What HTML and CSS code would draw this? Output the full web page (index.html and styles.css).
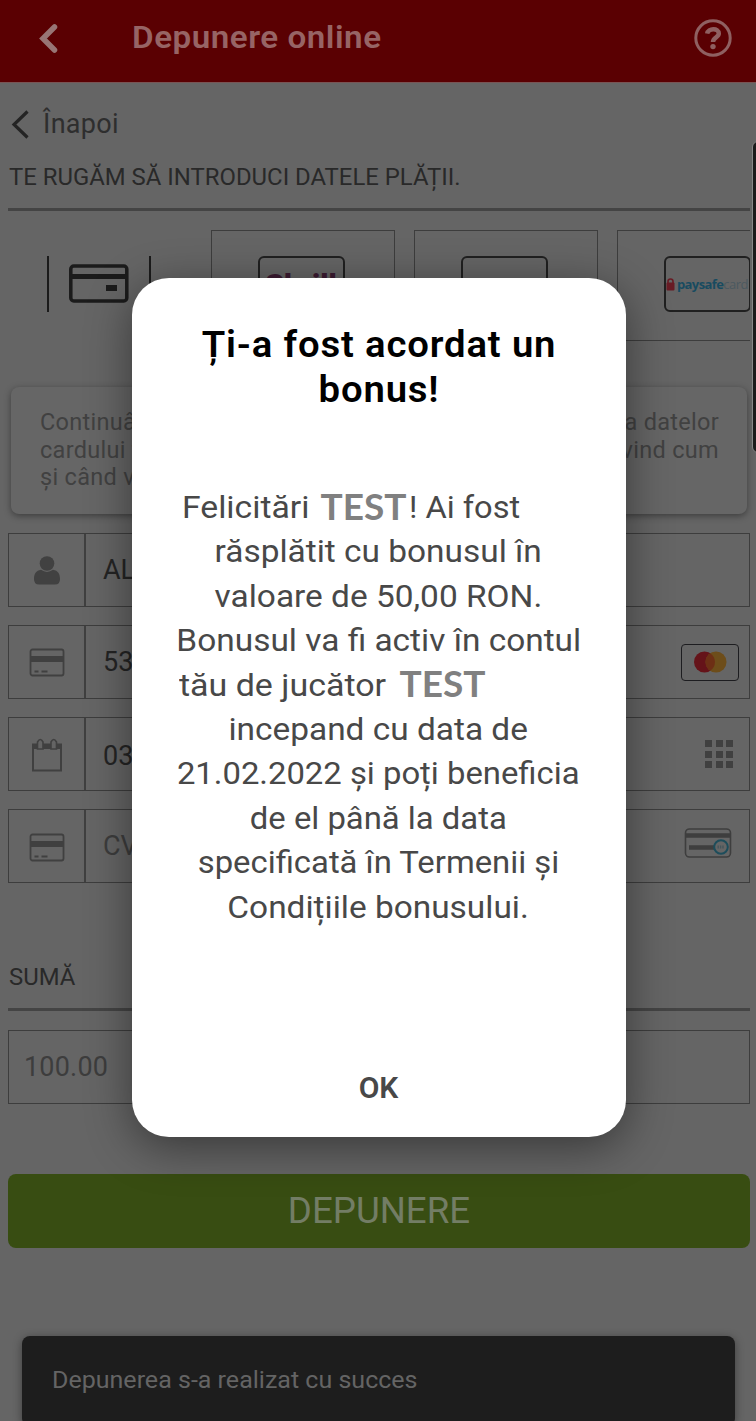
FILE: index.html
```html
<!DOCTYPE html>
<html lang="ro">
<head>
<meta charset="utf-8">
<title>Depunere online</title>
<link rel="stylesheet" href="styles.css">
</head>
<body>
<div class="screen">
  <header class="topbar">
    <svg class="topbar-back" width="24" height="34" viewBox="0 0 24 34"><path d="M17.500 5L6 16.500L17.500 28" /></svg>
    <h1 class="topbar-title"><span class="t-head">Depunere online</span></h1>
    <svg class="help" width="40" height="40" viewBox="0 0 40 40"><circle cx="20" cy="20" r="17.200"/><path d="M14.200 15.600C15 10 25.800 9.600 25.800 15.600C25.800 19.700 20 19 20 24"/><circle class="dot" cx="20" cy="28.600" r="2.700"/></svg>
  </header>
  <main class="content">
    <a class="back"><svg width="20" height="32" viewBox="0 0 20 32"><path d="M17.500 3.500L4 16.500L17.500 29.500"/></svg><span class="t-back">Înapoi</span></a>
    <h2 class="section"><span class="t-section">TE RUGĂM SĂ INTRODUCI DATELE PLĂȚII.</span></h2>
    <div class="methods">
      <div class="method active">
        <div class="bracket"><svg width="60" height="40" viewBox="0 0 60 40"><rect x="1.800" y="2" width="56" height="35" rx="3" fill="none" stroke="#1b1b1b" stroke-width="3.500"/><path d="M2 12.500H58" stroke="#1b1b1b" stroke-width="5"/><rect x="37" y="21" width="11" height="6" fill="#1b1b1b"/></svg></div>
      </div>
      <div class="method"><div class="logo skrill">Skrill</div></div>
      <div class="method"><div class="logo"></div></div>
      <div class="method"><div class="logo paysafe"><svg width="9" height="13" viewBox="0 0 9 13"><path d="M2 6V3.500A2.500 2.500 0 0 1 7 3.500V6" fill="none" stroke="#681b24" stroke-width="1.600"/><rect x="0.500" y="4.500" width="8" height="8" rx="1" fill="#681b24"/></svg><span class="ps-a">paysafe</span><span class="ps-b">card</span></div></div>
    </div>
    <div class="notice">
      <div class="notice-row"><span>Continuând, ești de acord cu stocarea</span><span>a datelor</span></div>
      <div class="notice-row"><span>cardului tău și confirmi politica pri</span><span>vind cum</span></div>
      <div class="notice-row"><span>și când vor fi folosite.</span></div>
    </div>
    <div class="fields">
      <div class="field"><div class="cell"><svg width="28" height="30" viewBox="0 0 28 30"><circle cx="14" cy="8.500" r="7.300" fill="#414141"/><path d="M8 14.800Q14 19 20 14.800C25 15.500 27 19 27 24Q27 29.500 22 29.500H6Q1 29.500 1 24C1 19 3 15.500 8 14.800Z" fill="#414141"/></svg></div><span class="value">ALEX</span></div>
      <div class="field"><div class="cell"><svg class="cardic" width="36" height="30" viewBox="0 0 36 30"><rect x="1.500" y="1.500" width="33" height="26" rx="2"/><path class="stripe" d="M2 11H34"/><path d="M5.500 23.500H9.500M12.500 23.500H18.500"/></svg></div><span class="value">5355</span><div class="mc"><svg width="34" height="22" viewBox="0 0 34 22"><circle cx="11.500" cy="11" r="10.500" fill="#651319"/><circle cx="23" cy="11" r="10.500" fill="#6d4d1a"/><path d="M17.200 2.200A10.500 10.500 0 0 1 17.200 19.800A10.500 10.500 0 0 1 17.200 2.200" fill="#6d2f15"/></svg></div></div>
      <div class="field"><div class="cell"><svg class="cal" width="32" height="34" viewBox="0 0 32 34"><path d="M2 6.500H30V32.500H2Z"/><path class="calbar" d="M2 8.500H30"/><path class="ring" d="M6.500 11V4Q9.300 -1 12 4V11ZM20 11V4Q22.700 -1 25.500 4V11Z"/></svg></div><span class="value low">03/24</span><div class="grid9"><i></i><i></i><i></i><i></i><i></i><i></i><i></i><i></i><i></i></div></div>
      <div class="field"><div class="cell"><svg class="cardic" width="36" height="30" viewBox="0 0 36 30"><rect x="1.500" y="1.500" width="33" height="26" rx="2"/><path class="stripe" d="M2 11H34"/><path d="M5.500 23.500H9.500M12.500 23.500H18.500"/></svg></div><span class="value faint">CVV</span><svg class="cvv" width="48" height="32" viewBox="0 0 48 32"><rect x="1.500" y="2" width="45" height="28" rx="4" fill="none" stroke="#3e3e3e" stroke-width="1.600"/><path d="M2 8.500H46M5 20.500H30" stroke="#3e3e3e" stroke-width="4.500"/><circle cx="37" cy="20" r="6.800" fill="#656565" stroke="#1d4d5b" stroke-width="2"/><path d="M33.500 20H40" stroke="#45565b" stroke-width="3" stroke-dasharray="1.400 1"/></svg></div>
    </div>
    <h2 class="section sum"><span class="t-sum">SUMĂ</span></h2>
    <div class="amount">100.00</div>
    <div class="submit"><span class="t-submit">DEPUNERE</span></div>
  </main>
  <div class="edge"></div>
  <div class="toast"><span class="t-toast">Depunerea s-a realizat cu succes</span></div>
  <div class="overlay">
    <section class="modal">
      <div class="modal-title"><div class="h1a">Ți-a fost acordat un</div><div class="h1b">bonus!</div></div>
      <div class="modal-text">
        <div class="line l1"><span class="l1a">Felicitări</span><b>TEST</b><span class="l1b">! Ai fost</span></div>
        <div class="line"><span class="wide">răsplătit cu bonusul în</span></div>
        <div class="line"><span class="wide">valoare de 50,00 RON.</span></div>
        <div class="line"><span class="wide">Bonusul va fi activ în contul</span></div>
        <div class="line l5"><span class="l5a">tău de jucător</span><b>TEST</b></div>
        <div class="line"><span class="wide">incepand cu data de</span></div>
        <div class="line"><span class="mid">21.02.2022 și poți beneficia</span></div>
        <div class="line"><span class="mid">de el până la data</span></div>
        <div class="line"><span class="mid">specificată în Termenii și</span></div>
        <div class="line"><span class="wide">Condițiile bonusului.</span></div>
      </div>
      <div class="ok">OK</div>
    </section>
  </div>
</div>
</body>
</html>
```
FILE: styles.css
```css
* { box-sizing: border-box; }
body { margin: 0; background: #656565; font-family: Roboto, "Liberation Sans", sans-serif; }
svg { display: block; flex: none; }
h1, h2 { margin: 0; font-weight: 400; }
.screen { position: relative; width: 756px; height: 1421px; overflow: hidden; background: #656565; white-space: nowrap; }

.topbar { height: 83px; background: #5a0002; border-bottom: 1px solid #795454; display: flex; align-items: flex-start; padding: 18px 23px 0 37px; }
.topbar-back { margin-top: 4px; fill: none; stroke: #987575; stroke-width: 5.5; stroke-linecap: round; }
.topbar-title { flex: 1; padding-left: 71px; font-size: 32px; line-height: 38px; font-weight: 600; color: #976465; letter-spacing: .5px; }
.t-head { display: inline-block; transform: scaleX(1.037); transform-origin: left; }
.help { fill: none; stroke: #8f6061; stroke-width: 3; }
.help path { stroke-width: 4.5; }
.help .dot { fill: #8f6061; stroke: none; }

.content { padding: 0 6px 0 8px; display: flex; flex-direction: column; }
.back { display: flex; align-items: center; height: 32px; margin: 25px 0 0 2px; gap: 13px; font-size: 27px; letter-spacing: .3px; color: #2e2e2e; }
.back svg { fill: none; stroke: #242424; stroke-width: 3.2; }
.section { height: 60px; margin: 11px 0 19px; padding: 11px 0 0 1px; font-size: 23.900px; line-height: 30px; color: #292929; border-bottom: 3px solid #444; }
.methods { display: flex; gap: 19px; height: 111px; overflow: hidden; }
.method { flex: none; width: 184px; border: 1px solid #3d3d3d; display: flex; justify-content: center; padding-top: 25px; }
.method.active { border-color: transparent; }
.bracket { width: 104px; height: 56px; margin-left: -3px; border: solid #1b1b1b; border-width: 0 2px; display: flex; align-items: center; justify-content: center; }
.logo { width: 87px; height: 56px; margin-left: -4px; border: 2px solid #202020; border-radius: 6px; display: flex; align-items: center; justify-content: center; }
.skrill { font-size: 30px; font-weight: 900; color: #3c1b32; }
.paysafe { font: bold 13px "Open Sans", sans-serif; }
.ps-a { margin-left: 2px; color: #184b60; letter-spacing: -.6px; }
.ps-b { color: #4b5960; font-weight: 400; letter-spacing: -.5px; }

.notice { margin: 46px 3px 0; height: 127px; padding: 22px 28px 0 29px; border-radius: 8px; background: #666; box-shadow: 0 2px 7px rgba(0,0,0,.4); font-size: 23.5px; line-height: 27.5px; color: #414141; letter-spacing: .3px; }
.notice-row { display: flex; justify-content: space-between; }
.fields { display: flex; flex-direction: column; gap: 18px; margin-top: 19px; }
.field { height: 74px; border: 1px solid #3d3d3d; display: flex; align-items: center; padding-right: 10px; }
.cell { width: 77px; height: 100%; border-right: 2px solid #404040; display: flex; align-items: center; justify-content: center; }
.value { flex: 1; padding-left: 17px; font-size: 27px; line-height: 32px; color: #242424; }
.value.low { padding-top: 4px; }
.value.faint { color: #3d3d3d; }
.cardic { fill: none; stroke: #404040; stroke-width: 1.8; margin-top: 2px; }
.cell .stripe { stroke-width: 6; }
.field:last-child .cardic { margin-top: 4px; }
.cal { fill: none; stroke: #404040; stroke-width: 2; margin-top: 2px; }
.cal .calbar { stroke-width: 5; }
.cal .ring { fill: #646464; stroke-width: 1.6; }
.mc { width: 58px; height: 37px; border: 1.5px solid #1d1d20; border-radius: 4px; display: flex; align-items: center; justify-content: center; }
.grid9 { display: grid; grid-template-columns: repeat(3, 7px); gap: 3.5px; margin-right: 6px; }
.grid9 i { height: 7px; background: #404040; }
.cvv { margin: -7px 7px 0 0; }

.section.sum { margin-top: 66px; height: 62px; padding-top: 13px; margin-bottom: 19px; }
.amount { height: 74px; border: 1px solid #3d3d3d; padding: 0 15px; font-size: 27px; line-height: 72px; color: #3d3d3d; letter-spacing: .2px; }
.submit { margin-top: 70px; height: 74px; border-radius: 8px; background: #384d12; display: flex; align-items: center; justify-content: center; padding-bottom: 2px; font-size: 36.7px; color: #737d65; }

.edge { position: absolute; left: 752px; top: 141px; width: 12px; height: 312px; border-radius: 6px; background: #1b1b1b; border: 1px solid #888; }
.toast { position: absolute; left: 22px; top: 1336px; width: 713px; height: 90px; padding: 30px 30px 0; border-radius: 8px; background: #1d1d1d; box-shadow: 0 2px 10px rgba(0,0,0,.4); font-size: 23px; line-height: 30px; color: #646464; }
.t-toast { display: inline-block; transform: scaleX(1.088); transform-origin: left; }

.overlay { position: absolute; inset: 0; display: flex; justify-content: center; align-items: flex-start; padding-top: 278px; }
.modal { width: 494px; height: 859px; margin-left: 1px; border-radius: 37px; background: #fff; box-shadow: 0 10px 46px rgba(0,0,0,.45); text-align: center; display: flex; flex-direction: column; }
.modal-title { padding-top: 45px; font-size: 36px; line-height: 44.5px; font-weight: 600; color: #000; letter-spacing: .8px; transform: scaleX(1.063); }
.modal-text { margin-top: 74px; font-size: 31.5px; line-height: 44.5px; color: #484848; }
.line { height: 44.4px; }
.wide, .mid, .l1a, .l1b, .l5a { display: inline-block; transform: scaleX(1.061); }
.mid { transform: scaleX(1.042); }
.line b { position: relative; top: -2.5px; font: 700 37px/44px Lato, sans-serif; color: #808080; }
.l1, .l5 { display: flex; text-align: left; }
.l1 { padding-left: 50px; }
.l1a, .l1b, .l5a { transform-origin: left; }
.l1a { width: 139px; transform: scaleX(1.07); }
.l1 b { width: 88px; }
.l1b { transform: scaleX(1.035); }
.l5 { padding-left: 47px; }
.l5a { width: 221px; transform: scaleX(1.078); }
.ok { margin-top: 140px; font-size: 30px; line-height: 36px; font-weight: 600; color: #484848; }
```
